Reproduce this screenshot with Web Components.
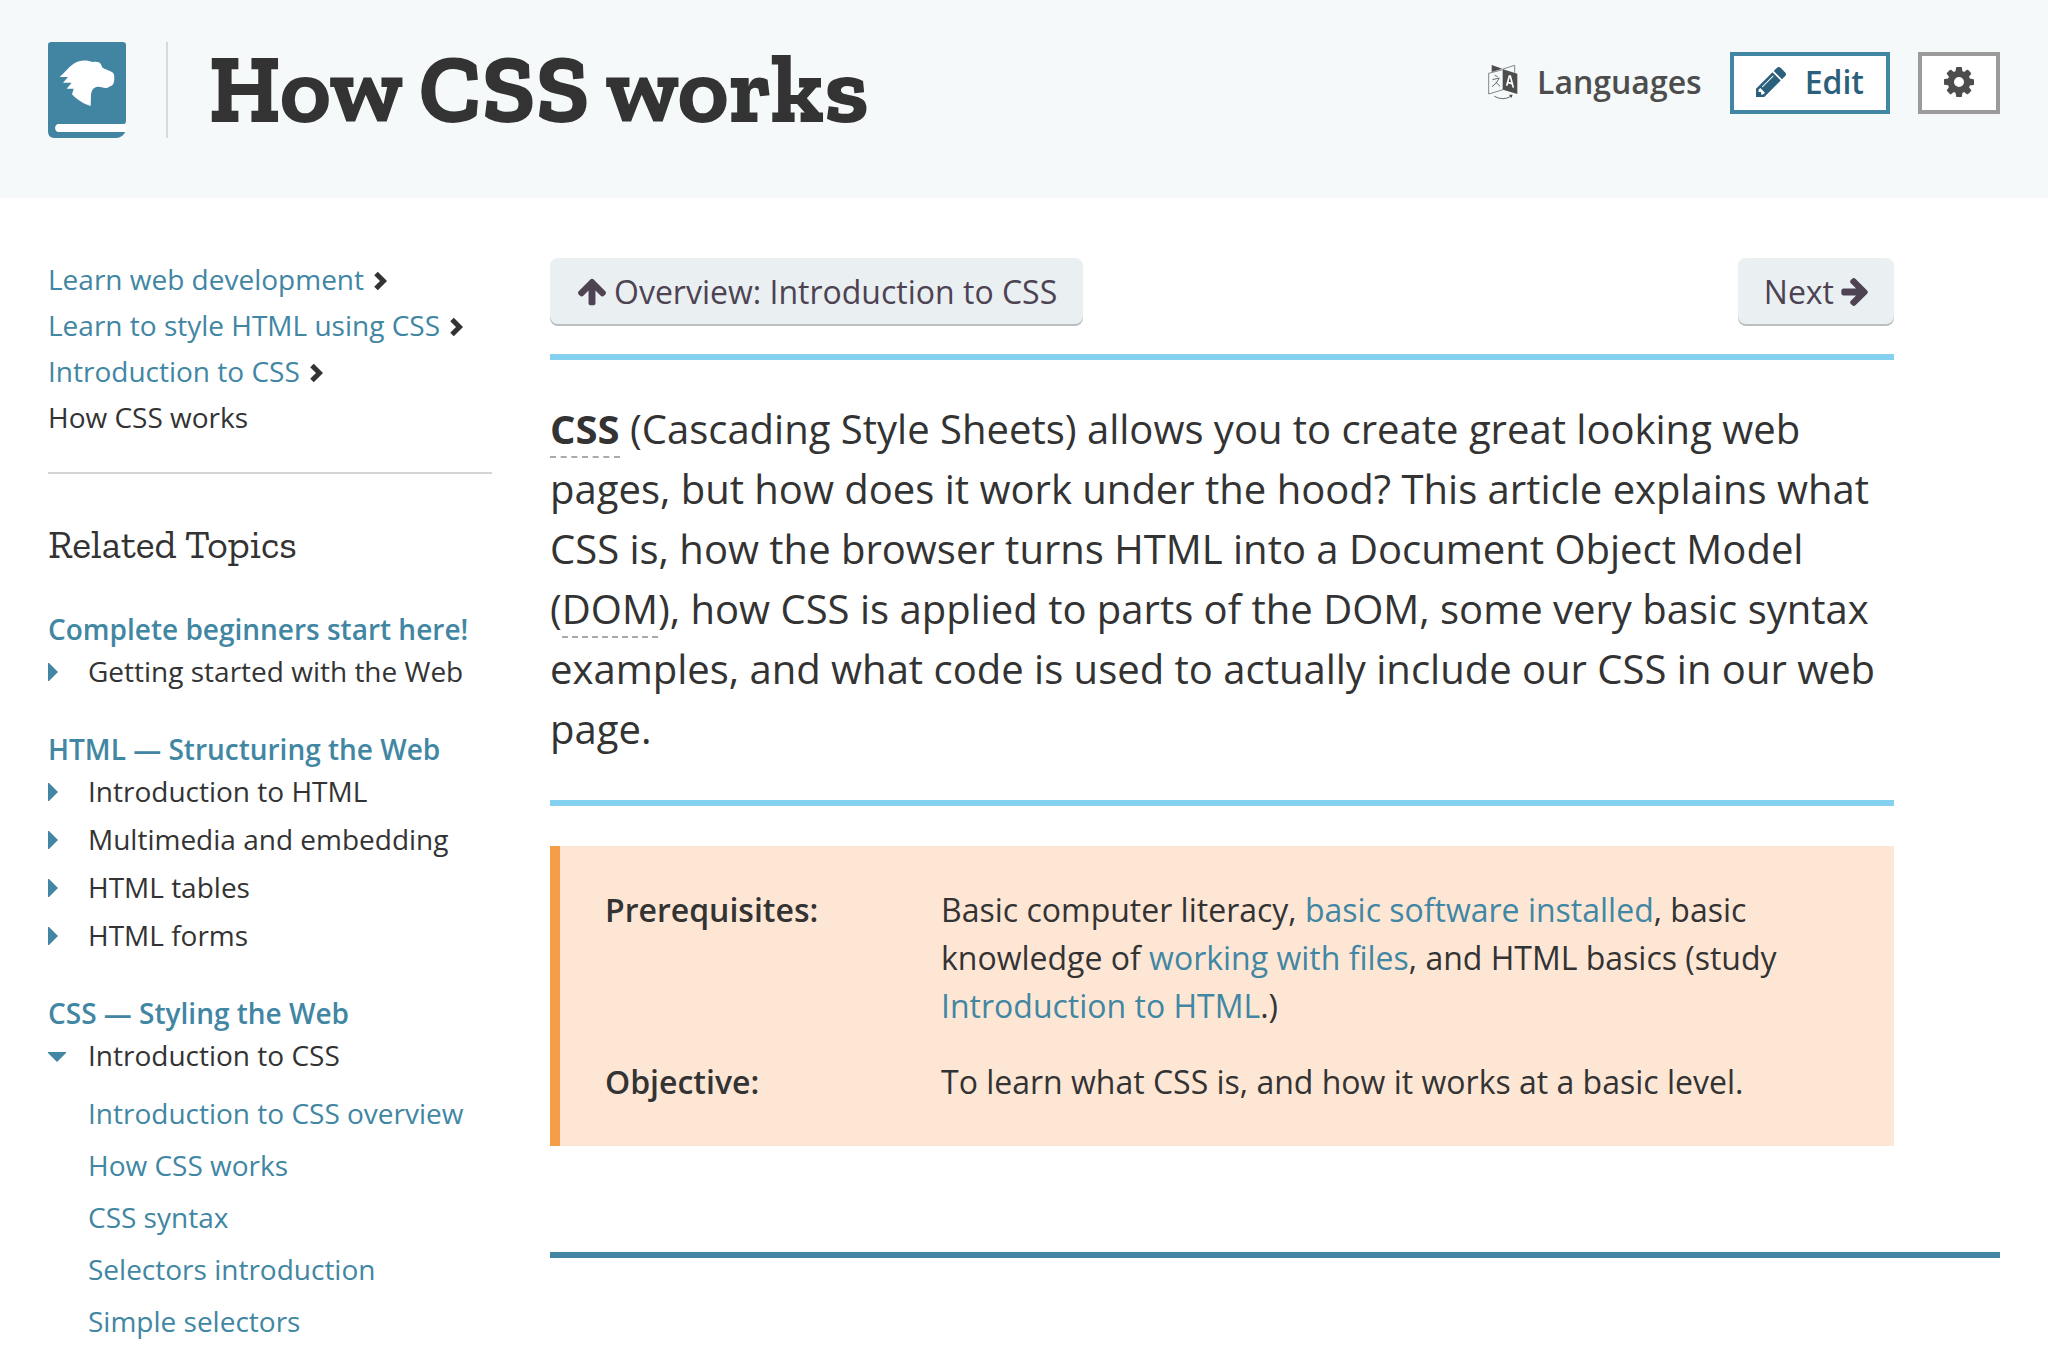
<!DOCTYPE html>
<html lang="en">
<head>
<meta charset="utf-8">
<title>How CSS works</title>
<style>
  :root {
    --link: #4186a3;
    --text: #333;
    --slab: "Zilla Slab", "DejaVu Serif Condensed", "DejaVu Serif", serif;
  }
  body {
    margin: 0;
    background: #fff;
    color: var(--text);
    font-family: "Open Sans", "Noto Sans", sans-serif;
    font-size: 28px;
  }
</style>
</head>
<body>
<doc-header heading="How CSS works"></doc-header>
<doc-layout>
  <doc-crumbs slot="side">
    <crumb-item href="#learn">Learn web development</crumb-item>
    <crumb-item href="#style">Learn to style HTML using CSS</crumb-item>
    <crumb-item href="#intro">Introduction to CSS</crumb-item>
    <crumb-item>How CSS works</crumb-item>
  </doc-crumbs>
  <related-topics slot="side" heading="Related Topics">
    <topic-group label="Complete beginners start here!">
      <topic-toggle label="Getting started with the Web"></topic-toggle>
    </topic-group>
    <topic-group label="HTML — Structuring the Web">
      <topic-toggle label="Introduction to HTML"></topic-toggle>
      <topic-toggle label="Multimedia and embedding"></topic-toggle>
      <topic-toggle label="HTML tables"></topic-toggle>
      <topic-toggle label="HTML forms"></topic-toggle>
    </topic-group>
    <topic-group label="CSS — Styling the Web">
      <topic-toggle label="Introduction to CSS" open>
        <topic-link>Introduction to CSS overview</topic-link>
        <topic-link>How CSS works</topic-link>
        <topic-link>CSS syntax</topic-link>
        <topic-link>Selectors introduction</topic-link>
        <topic-link>Simple selectors</topic-link>
      </topic-toggle>
    </topic-group>
  </related-topics>
  <doc-article></doc-article>
</doc-layout>

<script>
const define = (name, html, setup) => {
  const template = document.createElement('template');
  template.innerHTML = html;
  customElements.define(name, class extends HTMLElement {
    constructor() {
      super();
      this.attachShadow({ mode: 'open' }).append(template.content.cloneNode(true));
    }
    connectedCallback() { if (setup) setup(this, this.shadowRoot); }
  });
};

const icons = {
  pencil: ['128 148 1516 1516', 'M491 1536l91-91-235-235-91 91v107h128v128h107zm523-928q0-22-22-22-10 0-17 7l-542 542q-7 7-7 17 0 22 22 22 10 0 17-7l542-542q7-7 7-17zm-54-192l416 416-832 832h-416v-416zm683 96q0 53-37 90l-166 166-416-416 166-165q36-38 90-38 53 0 91 38l235 234q37 39 37 91z'],
  cog: ['128 128 1536 1536', 'M1152 896q0-106-75-181t-181-75-181 75-75 181 75 181 181 75 181-75 75-181zm512-109v222q0 12-8 23t-20 13l-185 28q-19 54-39 91 35 50 107 138 10 12 10 25t-9 23q-27 37-99 108t-94 71q-12 0-26-9l-138-108q-44 23-91 38-16 136-29 186-7 28-36 28h-222q-14 0-24.500-8.500t-11.500-21.500l-28-184q-49-16-90-37l-141 107q-10 9-25 9-14 0-25-11-126-114-165-168-7-10-7-23 0-12 8-23 15-21 51-66.500t54-70.500q-27-50-41-99l-183-27q-13-2-21-12.500t-8-23.500v-222q0-12 8-23t19-13l186-28q14-46 39-92-40-57-107-138-10-12-10-24 0-10 9-23 26-36 98.500-107.500t94.500-71.500q13 0 26 10l138 107q44-23 91-38 16-136 29-186 7-28 36-28h222q14 0 24.500 8.500t11.500 21.500l28 184q49 16 90 37l142-107q9-9 24-9 13 0 25 10 129 119 165 170 7 8 7 22 0 12-8 23-15 21-51 66.500t-54 70.500q26 50 41 98l183 28q13 2 21 12.500t8 23.500z'],
  up: ['117 188 1558 1476', 'M1675 971q0 51-37 90l-75 75q-38 38-91 38-54 0-90-38l-294-293v704q0 52-37.500 84.500t-90.500 32.500h-128q-53 0-90.500-32.500t-37.500-84.500v-704l-294 293q-36 38-90 38t-90-38l-75-75q-38-38-38-90 0-53 38-91l651-651q35-37 90-37 54 0 91 37l651 651q37 39 37 91z'],
  right: ['64 181 1536 1558', 'M1600 960q0 54-37 91l-651 651q-39 37-91 37-51 0-90-37l-75-75q-38-38-38-91t38-91l293-293h-704q-52 0-84.500-37.500t-32.500-90.500v-128q0-53 32.500-90.500t84.500-37.500h704l-293-294q-38-36-38-90t38-90l75-75q38-38 90-38 53 0 91 38l651 651q37 35 37 90z']
};

define('fa-icon', `
  <style>
    :host { display: inline-flex; width: 30px; height: 30px; flex: none; }
    svg { width: 100%; height: 100%; fill: currentColor; }
  </style>
  <svg aria-hidden="true"><path/></svg>`, (el, root) => {
  const [box, d] = icons[el.getAttribute('name')];
  root.querySelector('svg').setAttribute('viewBox', box);
  root.querySelector('path').setAttribute('d', d);
});

define('language-icon', `
  <style>
    :host { display: inline-flex; width: 30px; height: 36px; flex: none; }
    svg { width: 100%; height: 100%; }
  </style>
  <svg viewBox="23 42 90 108" fill="none" stroke="#4d4d4d" stroke-width="3" aria-hidden="true">
    <path d="M34 45L66 56L34 66Z" fill="#4d4d4d" stroke="none"/>
    <path d="M68 57L103 46V68" stroke-width="2"/>
    <path d="M25 70L68 59V119L25 132Z" fill="#f5f9fa" stroke-width="2"/>
    <path d="M68 58L111 71V132L68 119Z" fill="#4d4d4d" stroke="none"/>
    <path d="M79 107L87 78H90L99 113M82 97L95 101" stroke="#fff" stroke-width="5"/>
    <path d="M43 76L52 80M36 89L57 84Q50 100 35 110M46 96L59 109" stroke-width="2.500"/>
    <path d="M42 139Q68 153 92 139" stroke-width="2.500"/>
    <path d="M86 134L97 134L93 144Z" fill="#4d4d4d" stroke="none"/>
  </svg>`);

define('book-logo', `
  <style>
    :host { display: block; width: 78px; height: 96px; flex: none; }
    svg { display: block; width: 100%; height: 100%; }
  </style>
  <svg viewBox="54 66 234 288" role="img" aria-label="MDN">
    <path fill="#4285a2" d="M64 66H278Q288 66 288 76V302Q288 312 280 312H88Q76 312 76 324T88 336H286Q276 354 256 354H72Q54 354 54 334V76Q54 66 64 66Z"/>
    <path fill="#fff" d="M88 312H288V336H88Q76 336 76 324T88 312Z"/>
    <path fill="#fff" d="M89 171C104 157 116 141 131 131C149 119 170 119 188 126C199 124 209 125 213 133C217 146 220 145 232 150C243 155 251 157 252 164C254 179 253 191 245 197C237 198 235 205 227 204C216 203 209 198 199 201C188 204 184 214 183 226L182 258C160 252 141 239 126 223L131 206H110L125 188H99L114 171Z"/>
  </svg>`);

define('action-button', `
  <style>
    :host { display: block; --edge: transparent; }
    :host([kind="edit"]) { --edge: #4186a3; --fill: #fff; --ink: #2b607c; --pad: 22px; }
    :host([kind="gear"]) { --edge: #9b9b9b; --fill: #fff; --pad: 22px; }
    button {
      display: flex; align-items: center; gap: 19px;
      box-sizing: border-box; margin: 0; padding: 0 var(--pad, 0) 2px;
      border: 4px solid var(--edge); border-width: 4px var(--side, 4px);
      background: var(--fill, transparent); color: var(--ink, #4d4d4d);
      font: 600 32px/52px "Open Sans", "Noto Sans", sans-serif;
      cursor: pointer;
    }
    :host([kind="plain"]) { --side: 0; }
    :host([kind="gear"]) button { height: 62px; }
  </style>
  <button type="button"><slot name="icon"></slot><slot></slot></button>`, (el, root) => {
  if (el.hasAttribute('label')) root.querySelector('button').setAttribute('aria-label', el.getAttribute('label'));
});

define('doc-header', `
  <style>
    :host { display: block; background: #f5f9fa; }
    header { display: flex; align-items: flex-start; box-sizing: border-box; min-height: 198px; padding: 42px 48px 0; }
    .home { padding-right: 40px; border-right: 2px solid #d7d9da; }
    h1 { margin: 0; padding-left: 40px; font: 700 97px/94px var(--slab); }
    .actions { display: flex; gap: 28px; margin-left: auto; padding-top: 10px; }
  </style>
  <header>
    <a class="home" href="#home"><book-logo></book-logo></a>
    <h1></h1>
    <div class="actions">
      <action-button kind="plain"><language-icon slot="icon"></language-icon>Languages</action-button>
      <action-button kind="edit"><fa-icon slot="icon" name="pencil"></fa-icon>Edit</action-button>
      <action-button kind="gear" label="Settings"><fa-icon slot="icon" name="cog"></fa-icon></action-button>
    </div>
  </header>`, (el, root) => {
  root.querySelector('h1').textContent = el.getAttribute('heading');
});

define('doc-layout', `
  <style>
    :host { display: flex; gap: 58px; padding: 60px 48px 0; }
    aside { flex: 0 0 444px; }
    main { flex: 1; min-width: 0; }
  </style>
  <aside><slot name="side"></slot></aside>
  <main><slot></slot></main>`);

define('doc-crumbs', `
  <style>
    :host { display: block; padding-bottom: 34px; border-bottom: 2px solid #d4d4d4; }
    nav { display: flex; flex-direction: column; gap: 4px; }
  </style>
  <nav aria-label="Breadcrumbs"><slot></slot></nav>`);

define('crumb-item', `
  <style>
    :host { display: flex; align-items: center; gap: 10px; line-height: 42px; }
    a { color: var(--link); text-decoration: none; }
    svg { width: 13px; height: 20px; margin-top: 4px; }
    :host(:not([href])) svg { display: none; }
  </style>
  <a><slot></slot></a>
  <svg viewBox="0 0 13 20" fill="none" stroke="#333" stroke-width="5" aria-hidden="true"><path d="M2 2.500L9.500 10L2 17.500"/></svg>`, (el, root) => {
  const a = root.querySelector('a');
  if (el.hasAttribute('href')) a.href = el.getAttribute('href');
  else a.style.color = 'inherit';
});

define('related-topics', `
  <style>
    :host { display: block; padding-top: 46px; }
    h2 { margin: 0 0 40px; font: 400 40px/48px var(--slab); }
    div { display: flex; flex-direction: column; gap: 40px; }
  </style>
  <h2></h2>
  <div><slot></slot></div>`, (el, root) => {
  root.querySelector('h2').textContent = el.getAttribute('heading');
});

define('topic-group', `
  <style>
    :host { display: block; }
    a { display: block; margin-bottom: 4px; color: var(--link); font-weight: 600; line-height: 42px; text-decoration: none; }
    div { display: flex; flex-direction: column; gap: 14px; }
  </style>
  <a href="#topic"></a>
  <div><slot></slot></div>`, (el, root) => {
  root.querySelector('a').textContent = el.getAttribute('label');
});

define('topic-toggle', `
  <style>
    :host { display: block; }
    summary { display: flex; align-items: center; line-height: 34px; cursor: pointer; list-style: none; }
    svg { flex: none; width: 18px; height: 20px; margin-right: 22px; fill: var(--link); }
    .open { display: none; }
    details[open] .open { display: inline; }
    details[open] .closed { display: none; }
    div { display: flex; flex-direction: column; gap: 10px; padding: 20px 0 0 40px; }
  </style>
  <details>
    <summary>
      <svg viewBox="0 -2 18 20" aria-hidden="true"><path class="closed" d="M0 0H1L10 9L1 18H0Z"/><path class="open" d="M0 5H18V6L9 15L0 6Z"/></svg>
      <span></span>
    </summary>
    <div><slot></slot></div>
  </details>`, (el, root) => {
  root.querySelector('span').textContent = el.getAttribute('label');
  root.querySelector('details').open = el.hasAttribute('open');
});

define('topic-link', `
  <style>
    :host { display: block; line-height: 42px; }
    a { color: var(--link); text-decoration: none; }
  </style>
  <a href="#page"><slot></slot></a>`);

define('nav-button', `
  <style>
    :host { display: block; }
    a {
      display: flex; align-items: center; gap: 8px; padding: 2px 26px 0 28px;
      border-radius: 8px; background: #eaeff2; box-shadow: 0 2px 0 #b9bec1;
      color: #4d4353; font-size: 32px; line-height: 64px; text-decoration: none;
    }
    fa-icon { width: 28px; height: 28px; }
    :host([icon="right"]) a { flex-direction: row-reverse; gap: 6px; padding-left: 26px; }
  </style>
  <a href="#nav"><slot></slot></a>`, (el, root) => {
  const icon = document.createElement('fa-icon');
  icon.setAttribute('name', el.getAttribute('icon'));
  root.querySelector('a').prepend(icon);
});

define('facts-table', `
  <style>
    :host { display: block; padding: 40px 45px; border-left: 10px solid #f59e48; background: #fee6d5; font-size: 32px; line-height: 48px; }
    table { width: 100%; border-collapse: collapse; }
    th, td { padding: 0; text-align: left; vertical-align: top; }
    th { width: 336px; font-weight: 600; }
    tr + tr > * { padding-top: 28px; }
    a { color: var(--link); text-decoration: none; }
  </style>
  <table>
    <tr><th scope="row">Prerequisites:</th><td>Basic computer literacy, <a href="#software">basic software installed</a>, basic knowledge of <a href="#files">working with files</a>, and HTML basics (study <a href="#html">Introduction to HTML</a>.)</td></tr>
    <tr><th scope="row">Objective:</th><td>To learn what CSS is, and how it works at a basic level.</td></tr>
  </table>`);

define('doc-article', `
  <style>
    :host { display: block; padding-bottom: 60px; }
    article { max-width: 1344px; padding-bottom: 106px; }
    nav { display: flex; justify-content: space-between; padding-bottom: 30px; }
    p { margin: 0 0 40px; padding: 39px 0 41px; border: solid #84d0f0; border-width: 6px 0; font-size: 40px; line-height: 60px; }
    abbr { border-bottom: 2px dashed #aaa; text-decoration: none; }
    hr { margin: 0; border: 0; border-top: 6px solid #4186a3; }
    strong { font-weight: 700; }
  </style>
  <article>
    <nav>
      <nav-button icon="up">Overview: Introduction to CSS</nav-button>
      <nav-button icon="right">Next</nav-button>
    </nav>
    <p><strong><abbr>CSS</abbr></strong> (Cascading Style Sheets) allows you to create great looking web pages, but how does it work under the hood? This article explains what CSS is, how the browser turns HTML into a Document Object Model (<abbr>DOM</abbr>), how CSS is applied to parts of the DOM, some very basic syntax examples, and what code is used to actually include our CSS in our web page.</p>
    <facts-table></facts-table>
  </article>
  <hr>`);
</script>
</body>
</html>
